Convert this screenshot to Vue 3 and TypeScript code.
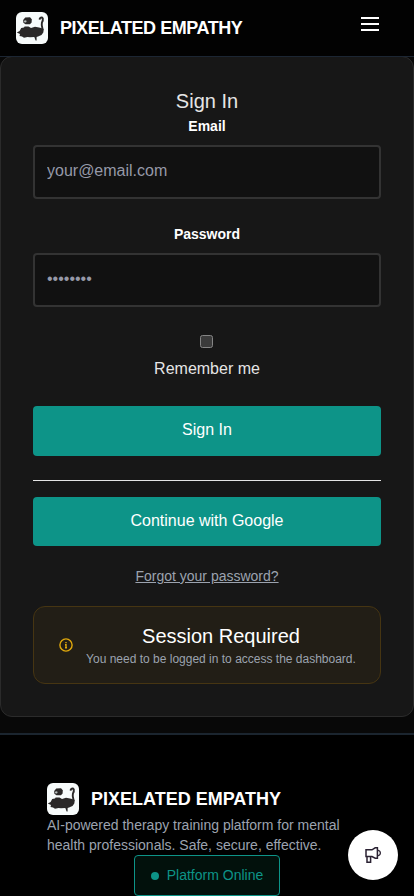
<script setup lang="ts">
import { h, ref } from 'vue'
import type { FunctionalComponent } from 'vue'

const email = ref('')
const password = ref('')
const remember = ref(false)

const BrandMark: FunctionalComponent = () =>
  h('svg', { viewBox: '0 0 32 32', width: 32, height: 32, 'aria-hidden': 'true' }, [
    h('rect', { width: 32, height: 32, rx: 6, fill: '#f7fbfb' }),
    h('path', {
      fill: '#2a2828',
      d: 'M0.8 20.6 L3.6 18.9 L5.2 16 L8 15.6 L8.6 14.4 L12.5 14.4 L15 16 L19 14.8 L23 15.6 L25 16 L27.8 17 L27.3 20.4 L25.5 23 L22 24.6 L20.6 25 L20.6 28.4 L19.6 28.4 L18.3 25 L14 25.2 L11.5 25 L8 25.8 L6 24.5 L3.5 24 L4 22 Z',
    }),
    h('path', {
      fill: 'none',
      stroke: '#2a2828',
      'stroke-width': 1.9,
      d: 'M23.4 7.6 L24 6.3 Q25.8 4.7 26.8 6.4 Q27.2 8.2 25.9 10.6 Q25.2 13 26.6 17.5',
    }),
    h('path', { fill: '#2a2828', d: 'M7.2 8 L9.2 5.5 L14 5.2 L15.8 7.2 L15.6 10.6 L14 12.2 L9.5 12.3 L7.4 10.8 Z' }),
    h('path', { fill: '#b9bfbe', d: 'M8 8.8 L10 8.3 L10.6 9.3 L10 10.4 L8.2 10.2 Z' }),
  ])
</script>

<template>
  <div class="page">
    <header class="topbar">
      <div class="brand">
        <BrandMark />
        <span class="brand-name tight">PIXELATED EMPATHY</span>
      </div>
      <button class="menu" aria-label="Menu"><i></i><i></i><i></i></button>
    </header>

    <main class="card">
      <h1>Sign In</h1>
      <form @submit.prevent>
        <label class="label" for="email">Email</label>
        <input id="email" v-model="email" class="field" type="email" placeholder="your@email.com" />
        <label class="label second" for="password">Password</label>
        <input id="password" v-model="password" class="field" type="password" placeholder="••••••••" />
        <div class="remember">
          <button
            type="button"
            class="check"
            role="checkbox"
            :aria-checked="remember"
            aria-label="Remember me"
            @click="remember = !remember"
          ></button>
          <span>Remember me</span>
        </div>
        <button class="primary" type="submit">Sign In</button>
      </form>
      <hr />
      <button class="primary google">Continue with Google</button>
      <a class="forgot" href="#">Forgot your password?</a>
      <section class="notice">
        <svg class="info" viewBox="0 0 14 14" width="14" height="14" fill="none" stroke="#e0a80c" stroke-width="1.4">
          <circle cx="7" cy="7" r="6.1" />
          <path d="M7 3.9v1.4M6 6.7h1v3M6 9.7h2" />
        </svg>
        <div class="notice-body">
          <h2>Session Required</h2>
          <p>You need to be logged in to access the dashboard.</p>
        </div>
      </section>
    </main>

    <footer class="footer">
      <div class="brand">
        <BrandMark />
        <span class="brand-name">PIXELATED EMPATHY</span>
      </div>
      <p class="about">AI-powered therapy training platform for mental health professionals. Safe, secure, effective.</p>
      <div class="status"><span class="dot"></span>Platform Online</div>
    </footer>

    <button class="feedback" aria-label="Feedback">
      <svg viewBox="0 0 18 18" width="18" height="18" fill="none" stroke="#2b2233" stroke-width="1.5">
        <path d="M2 3.8H8L11.2 1.8H13.4V12.2H11.2L8 10.5H2Z" />
        <path d="M3 10.5V16.2H6.6V10.5" />
        <path d="M13.4 4.2Q16.4 4.8 16.4 7T13.4 9.8" stroke-width="1.2" />
      </svg>
    </button>
  </div>
</template>

<style>
html,
body {
  background: #000;
  overflow: hidden;
}
</style>

<style scoped>
* {
  box-sizing: border-box;
}
.page {
  height: 896px;
  overflow: hidden;
  background: #080808;
  color: #e5e5e5;
  font-family: 'Liberation Sans', Arial, sans-serif;
}
h1,
h2,
p {
  margin: 0;
  font-weight: 400;
}
button {
  border: 0;
  padding: 0;
  font-family: inherit;
}
.topbar {
  position: relative;
  z-index: 1;
  display: flex;
  justify-content: space-between;
  height: 57px;
  padding: 12px 35px 0 16px;
  background: #020202;
  border-bottom: 1px solid #1c2633;
}
.brand {
  display: flex;
  align-items: center;
  gap: 12px;
  height: 32px;
}
.brand-name {
  color: #fff;
  font-size: 18px;
  font-weight: 700;
  line-height: 28px;
}
.tight {
  letter-spacing: -0.45px;
}
.menu {
  display: flex;
  flex-direction: column;
  gap: 4px;
  width: 18px;
  height: 14px;
  margin: 5px 0 0;
  background: none;
}
.menu i {
  height: 2px;
  background: #fff;
}
.card {
  display: flex;
  flex-direction: column;
  height: 661px;
  margin-top: -1px;
  padding: 32px 32px 31px;
  background: #171717;
  border: 1px solid #2b2b2b;
  border-radius: 12px;
  text-align: center;
}
h1 {
  height: 27px;
  font-size: 20px;
  line-height: 25px;
}
form {
  display: flex;
  flex-direction: column;
}
.label {
  height: 21px;
  margin-bottom: 8px;
  color: #fff;
  font-size: 14px;
  font-weight: 700;
  line-height: 21px;
}
.second {
  margin-top: 25px;
}
.field {
  width: 100%;
  height: 54px;
  padding: 0 12px 2px;
  background: #111;
  border: 2px solid #333;
  border-radius: 4px;
  color: #fff;
  font: 16px 'Liberation Sans', Arial, sans-serif;
  outline: 0;
}
.field::placeholder {
  color: #9699a8;
}
.remember {
  display: flex;
  flex-direction: column;
  align-items: center;
  gap: 9px;
  height: 71px;
  margin-top: 28px;
  font-size: 16px;
  line-height: 24px;
}
.check {
  width: 13px;
  height: 13px;
  margin-right: 1px;
  background: #3b3b3b;
  border: 1px solid #858585;
  border-radius: 2.5px;
}
.primary {
  height: 50px;
  padding-bottom: 2px;
  background: #0d9488;
  border-radius: 4px;
  color: #fff;
  font-size: 16px;
}
hr {
  width: 100%;
  margin: 24px 0 16px;
  border: 0;
  border-top: 1px solid #e5e5e5;
}
.google {
  height: 49px;
  padding-bottom: 1px;
}
.forgot {
  align-self: center;
  margin-top: 20px;
  color: #9ca3af;
  font-size: 14px;
  line-height: 21px;
}
.notice {
  display: flex;
  align-items: center;
  gap: 13px;
  height: 78px;
  margin-top: 19px;
  padding: 0 24px 0 25px;
  background: #221e16;
  border: 1px solid #463512;
  border-radius: 12px;
}
.info {
  flex: none;
}
.notice-body {
  flex: 1;
  padding-top: 2px;
  white-space: nowrap;
}
h2 {
  color: #fff;
  font-size: 20px;
  line-height: 26px;
}
.notice-body p {
  color: #9ca3af;
  font-size: 12px;
  line-height: 20px;
}
.footer {
  display: flex;
  flex-direction: column;
  height: 180px;
  margin-top: 16px;
  padding: 48px 47px 0;
  background: #000;
  border-top: 2px solid #1b252f;
}
.about {
  color: #9ca3af;
  font-size: 14px;
  line-height: 20px;
}
.status {
  display: flex;
  align-items: center;
  align-self: center;
  gap: 8px;
  height: 41px;
  padding: 0 16px 1px;
  background: #02110c;
  border: 1px solid #0d9488;
  border-radius: 4px;
  color: #0d9488;
  font-size: 14px;
}
.dot {
  width: 8px;
  height: 8px;
  margin-top: 1px;
  background: #0d9488;
  border-radius: 50%;
}
.feedback {
  position: fixed;
  right: 16px;
  bottom: 16px;
  display: grid;
  place-items: center;
  width: 50px;
  height: 50px;
  background: #fff;
  border-radius: 50%;
}
</style>
